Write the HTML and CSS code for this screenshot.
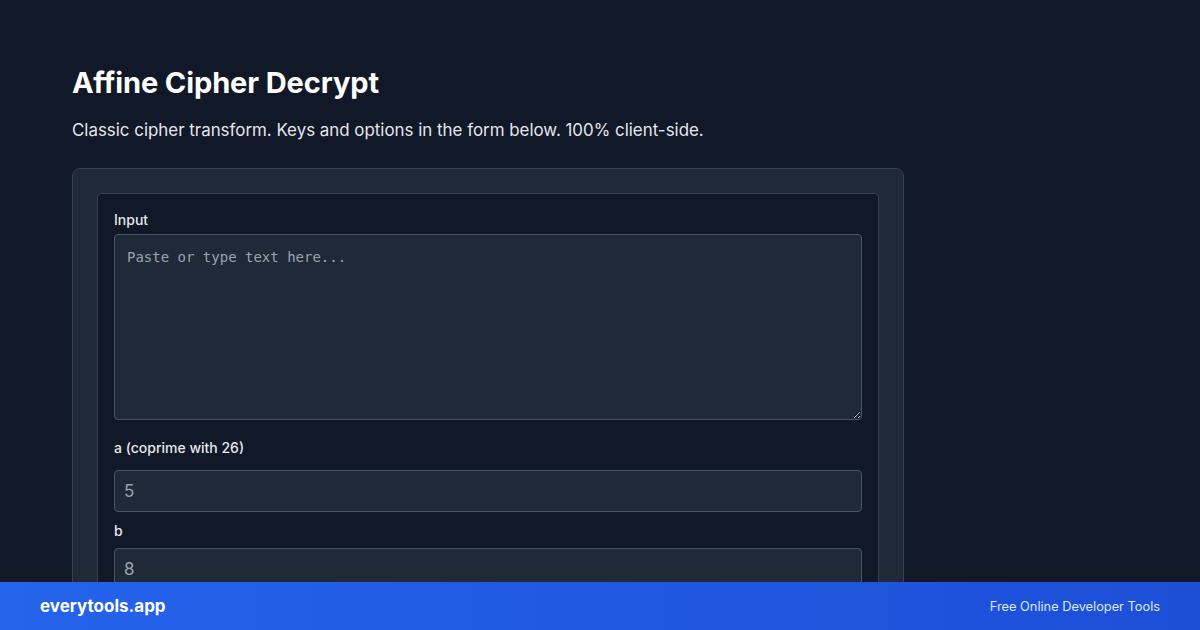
FILE: index.html
```html
<!DOCTYPE html>
<html>
<head>
<meta charset="utf-8">
<link rel="stylesheet" href="styles.css">
</head>
<body>
<main class="page">
  <h1 class="title">Affine Cipher Decrypt</h1>
  <p class="subtitle">Classic cipher transform. Keys and options in the form below. 100% client-side.</p>
  <section class="card">
    <div class="panel">
      <label class="label">Input</label>
      <textarea class="textarea" placeholder="Paste or type text here..."></textarea>
      <label class="label label-a">a (coprime with 26)</label>
      <input class="field field-a" type="text" placeholder="5">
      <label class="label label-b">b</label>
      <input class="field field-b" type="text" placeholder="8">
    </div>
  </section>
</main>
<footer class="footer">
  <span class="brand">everytools.app</span>
  <span class="tagline">Free Online Developer Tools</span>
</footer>
</body>
</html>
```

FILE: styles.css
```css
* { box-sizing: border-box; }
html, body {
  margin: 0;
  padding: 0;
  width: 1200px;
  height: 630px;
  overflow: hidden;
  background: #111827;
  font-family: Inter, "Noto Sans", "Liberation Sans", sans-serif;
  color: #f9fafb;
}
.page {
  padding: 65px 72px 0 72px;
  width: 976px;
}
.title {
  margin: 0;
  font-size: 29px;
  line-height: 36px;
  font-weight: 700;
  color: #ffffff;
  letter-spacing: -0.1px;
}
.subtitle {
  margin: 17px 0 0 0;
  font-size: 16.9px;
  line-height: 24px;
  color: #e5e7eb;
}
.card {
  margin-top: 26px;
  width: 832px;
  background: #1f2937;
  border: 1px solid #374151;
  border-radius: 8px;
  padding: 24px 24px 0 24px;
  height: 480px;
}
.panel {
  background: #111827;
  border: 1px solid #374151;
  border-radius: 4px;
  padding: 16px 16px 0 16px;
  display: flex;
  flex-direction: column;
  height: 460px;
}
.label {
  display: block;
  font-size: 14px;
  line-height: 20px;
  font-weight: 500;
  color: #e5e7eb;
}
.textarea {
  margin-top: 4px;
  width: 100%;
  height: 186px;
  background: #1f2937;
  border: 1px solid #4b5563;
  border-radius: 4px;
  padding: 12px;
  font-family: "DejaVu Sans Mono", "Liberation Mono", monospace;
  font-size: 14px;
  line-height: 20px;
  color: #e5e7eb;
  resize: vertical;
  outline: none;
}
.textarea::placeholder { color: #9ca3af; }
.label-a { margin-top: 18px; }
.field {
  width: 100%;
  height: 42px;
  background: #1f2937;
  border: 1px solid #4b5563;
  border-radius: 4px;
  padding: 0 9px;
  font-family: Inter, "Noto Sans", "Liberation Sans", sans-serif;
  font-size: 17px;
  color: #e5e7eb;
  outline: none;
}
.field::placeholder { color: #9ca3af; }
.field-a { margin-top: 12px; }
.label-b { margin-top: 9px; }
.field-b { margin-top: 7px; }
.footer {
  position: absolute;
  left: 0;
  bottom: 0;
  width: 1200px;
  height: 48px;
  background: linear-gradient(90deg, #2563eb, #1d4ed8);
  display: flex;
  align-items: center;
  justify-content: space-between;
  padding: 0 40px;
}
.brand {
  font-size: 17px;
  font-weight: 700;
  color: #ffffff;
}
.tagline {
  font-size: 12.8px;
  color: #dbeafe;
}
```
